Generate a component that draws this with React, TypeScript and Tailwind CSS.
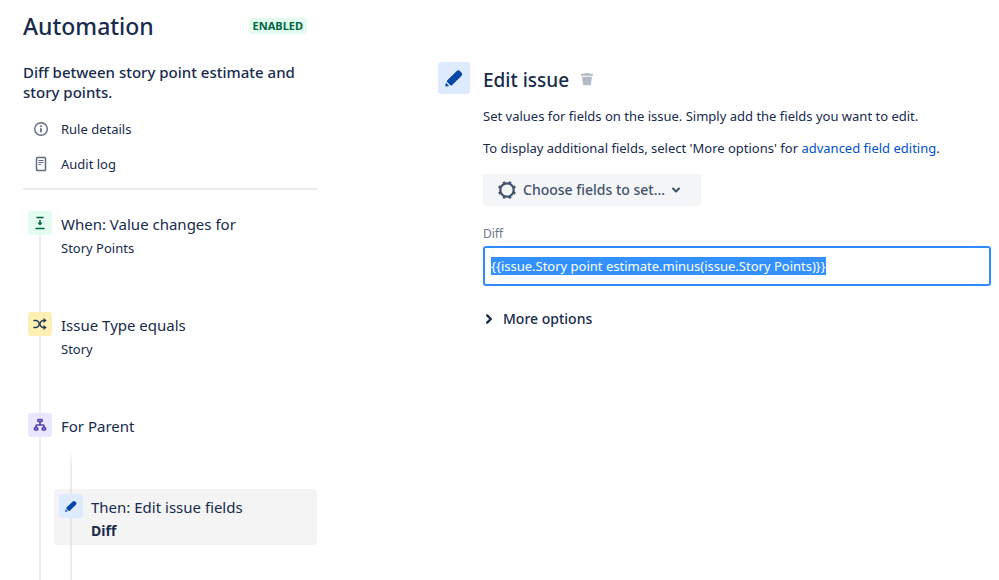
import React, { useEffect, useRef, useState } from 'react';

interface IconProps {
  className?: string;
}

const PencilIcon: React.FC<IconProps> = ({ className }) => (
  <svg viewBox="0 0 24 24" fill="currentColor" className={className} aria-hidden="true">
    <path d="M4 16.800 3.300 19.800a.7.7 0 0 0 .8.8l3-.7z" />
    <path d="M5.300 14.200 14.500 5.200a2.600 2.600 0 0 1 3.600 0l1.300 1.300a2.600 2.600 0 0 1 0 3.600L10.200 19.100a1.400 1.400 0 0 1-2 0l-2.900-2.900a1.400 1.400 0 0 1 0-2z" />
  </svg>
);

const InfoIcon: React.FC<IconProps> = ({ className }) => (
  <svg viewBox="0 0 16 16" fill="none" stroke="currentColor" strokeWidth="1.4" className={className} aria-hidden="true">
    <circle cx="8" cy="8" r="6.300" />
    <path d="M8 7.200v4" strokeWidth="1.800" />
    <circle cx="8" cy="5.200" r="1" fill="currentColor" stroke="none" />
  </svg>
);

const LogIcon: React.FC<IconProps> = ({ className }) => (
  <svg viewBox="0 0 16 16" fill="none" stroke="currentColor" className={className} aria-hidden="true">
    <rect x="3.500" y="1.500" width="9" height="13" rx="0.800" strokeWidth="1.500" />
    <path d="M5.500 4.500h5M5.500 6.500h5M5.500 8.500h2.500" strokeWidth="1.200" />
  </svg>
);

const ValueChangeIcon: React.FC<IconProps> = ({ className }) => (
  <svg viewBox="0 0 16 16" fill="none" stroke="currentColor" strokeWidth="1.500" className={className} aria-hidden="true">
    <path d="M5 2.500h6M4 13.500h8" strokeLinecap="round" />
    <path d="M8 5v4" />
    <path d="M5.500 7.500h5L8 10.700z" fill="currentColor" stroke="none" />
  </svg>
);

const ShuffleIcon: React.FC<IconProps> = ({ className }) => (
  <svg viewBox="0 0 16 16" fill="none" stroke="currentColor" strokeWidth="1.500" className={className} aria-hidden="true">
    <path d="M2 4.500h2c1.200 0 1.800.5 2.400 1.400l2.400 4.200c.6.900 1.200 1.400 2.200 1.400h1.500" strokeLinecap="round" />
    <path d="M2 11.500h2c1.200 0 1.800-.5 2.400-1.400l2.400-4.200c.6-.9 1.200-1.400 2.200-1.400h1.500" strokeLinecap="round" />
    <path d="M11.500 2v5l3.200-2.500zM11.500 9v5l3.200-2.500z" fill="currentColor" stroke="none" />
  </svg>
);

const BranchIcon: React.FC<IconProps> = ({ className }) => (
  <svg viewBox="0 0 16 16" fill="none" stroke="currentColor" strokeWidth="1.700" className={className} aria-hidden="true">
    <rect x="6" y="2.500" width="4" height="2" rx="0.500" />
    <path d="M8 5v3M4.100 10.500V8.700c0-.5.300-.7.700-.7h6.400c.4 0 .7.200.7.700v1.800" />
    <rect x="2.500" y="10.700" width="3.200" height="2.300" rx="1" />
    <rect x="10.300" y="10.700" width="3.200" height="2.300" rx="1" />
  </svg>
);

const TrashIcon: React.FC<IconProps> = ({ className }) => (
  <svg viewBox="0 0 16 16" fill="currentColor" className={className} aria-hidden="true">
    <path d="M2 2.500c0-.4.300-.7.700-.7h3.100l.4-.6c.1-.2.300-.3.500-.3h2.600c.2 0 .4.100.5.300l.4.600h3.100c.4 0 .7.300.7.700v1.200H2z" />
    <path d="M3 4.700h10l-1 7.300c-.1.700-.6 1.200-1.300 1.200H5.300c-.7 0-1.200-.5-1.300-1.200z" />
  </svg>
);

const GearIcon: React.FC<IconProps> = ({ className }) => (
  <svg viewBox="0 0 20 20" fill="none" stroke="currentColor" className={className} aria-hidden="true">
    <circle cx="10" cy="10" r="6.700" strokeWidth="2.200" />
    {/* Eight teeth, set either side of the axes */}
    <circle cx="10" cy="10" r="8" strokeWidth="2" pathLength="80" strokeDasharray="4 6" strokeDashoffset="-3" />
  </svg>
);

const ChevronIcon: React.FC<IconProps> = ({ className }) => (
  <svg viewBox="0 0 10 10" fill="none" stroke="currentColor" strokeWidth="2" strokeLinecap="round" strokeLinejoin="round" className={className} aria-hidden="true">
    <path d="M2 3.500 5 6.500l3-3" />
  </svg>
);

interface StepProps {
  icon: React.ReactNode;
  iconClass: string;
  title: string;
  detail?: string;
  className?: string;
  children?: React.ReactNode;
}

const Step: React.FC<StepProps> = ({ icon, iconClass, title, detail, className, children }) => (
  <li className={`flex gap-0.5 pl-[5px] ${className}`}>
    <div className="flex w-6 shrink-0 flex-col items-center">
      <span className={`flex size-6 shrink-0 items-center justify-center rounded-[3px] ${iconClass}`}>{icon}</span>
      <span className="w-0.5 flex-1 bg-[#ebecf0]" />
    </div>
    <div className="flex flex-1 flex-col">
      <a href="#step" className="block pt-px pl-[7px]">
        <span className="block text-[15px] leading-6">{title}</span>
        {detail && <span className="block text-[13px] leading-6">{detail}</span>}
      </a>
      {children}
    </div>
  </li>
);

export default function App() {
  const [value, setValue] = useState('{{issue.Story point estimate.minus(issue.Story Points)}}');
  const inputRef = useRef<HTMLInputElement>(null);

  // Open the editor with the expression ready to be replaced
  useEffect(() => {
    inputRef.current?.focus();
    inputRef.current?.select();
  }, []);

  return (
    <div className="flex min-h-screen gap-[12.5%] bg-white pr-2 pl-[23px] font-['Noto_Sans','Open_Sans',sans-serif] text-[#172b4d]">
      <aside className="flex w-[294px] shrink-0 flex-col">
        <header className="flex items-center justify-between pt-2 pr-2.5">
          <h1 className="text-[23px] leading-9 font-medium">Automation</h1>
          <span className="rounded-[3px] bg-[#e3fcef] px-1 text-[11px] leading-4 font-bold text-[#006644]">ENABLED</span>
        </header>

        <h2 className="mt-[18px] text-[15px] leading-5 font-medium">Diff between story point estimate and story points.</h2>

        <nav className="mt-[15px] flex flex-col gap-[11px] pl-2.5 text-[13px] leading-6">
          <a href="#details" className="flex items-center gap-3">
            <InfoIcon className="size-4 text-[#5e6c84]" />
            Rule details
          </a>
          <a href="#audit" className="flex items-center gap-3">
            <LogIcon className="size-4 text-[#5e6c84]" />
            Audit log
          </a>
        </nav>

        <hr className="mt-3 border-t-2 border-[#ebecf0]" />

        <ol className="mt-[21px] flex flex-1 flex-col">
          <Step
            className="min-h-[101px]"
            icon={<ValueChangeIcon className="size-4" />}
            iconClass="bg-[#e3fcef] text-[#006644]"
            title="When: Value changes for"
            detail="Story Points"
          />
          <Step
            className="min-h-[101px]"
            icon={<ShuffleIcon className="size-4" />}
            iconClass="bg-[#fff0b3] text-[#253858]"
            title="Issue Type equals"
            detail="Story"
          />
          <Step
            className="flex-1"
            icon={<BranchIcon className="size-4" />}
            iconClass="bg-[#eae6ff] text-[#5243aa]"
            title="For Parent"
          >
            <div className="mt-[11px] flex flex-1 flex-col">
              <span className="ml-4 h-10 w-0.5 bg-linear-to-b from-transparent to-[#ebecf0] to-40%" />
              <a href="#edit" className="flex gap-2 rounded-[3px] bg-[#f4f4f4] pl-[5px]">
                <span className="flex w-6 flex-col items-center">
                  <span className="h-[5px] w-0.5 bg-[#e4e4ea]" />
                  <span className="flex size-6 items-center justify-center rounded-[3px] bg-[#deebff] text-[#0747a6]">
                    <PencilIcon className="size-4" />
                  </span>
                  <span className="w-0.5 flex-1 bg-[#e4e4ea]" />
                </span>
                <span className="pt-1.5 pb-[3px]">
                  <span className="block text-[15px] leading-6">Then: Edit issue fields</span>
                  <span className="block text-[14px] leading-[23px] font-bold">Diff</span>
                </span>
              </a>
              <span className="ml-4 min-h-8 w-0.5 flex-1 bg-[#ebecf0]" />
            </div>
          </Step>
        </ol>
      </aside>

      <main className="flex min-w-0 flex-1 items-start gap-[13px] pt-[62px]">
        <span className="flex size-8 shrink-0 items-center justify-center rounded-[3px] bg-[#deebff] text-[#0747a6]">
          <PencilIcon className="size-6" />
        </span>

        <section className="min-w-0 flex-1">
          <div className="flex items-center gap-2.5">
            <h2 className="text-[19px] leading-9 font-medium">Edit issue</h2>
            <button type="button" aria-label="Delete" className="text-[#b3bac5]">
              <TrashIcon className="size-4" />
            </button>
          </div>

          <p className="mt-2 text-[13px] leading-5">
            Set values for fields on the issue. Simply add the fields you want to edit.
          </p>
          <p className="mt-3 text-[13px] leading-5">
            To display additional fields, select 'More options' for{' '}
            <a href="#advanced" className="text-[#0052cc]">advanced field editing</a>.
          </p>

          <button type="button" className="mt-4 flex h-8 items-center gap-1.5 rounded-[3px] bg-[#f4f5f7] pr-5 pl-3.5 text-[14px] leading-5 font-medium text-[#42526e]">
            <GearIcon className="size-5" />
            Choose fields to set...
            <ChevronIcon className="size-2.5" />
          </button>

          <label htmlFor="diff" className="mt-5 block text-[12px] leading-4 text-[#6b778c]">Diff</label>
          <input
            id="diff"
            ref={inputRef}
            type="text"
            value={value}
            onChange={e => setValue(e.target.value)}
            className="mt-1 h-10 w-full rounded-[3px] border-2 border-[#2e8bff] px-1.5 text-[13px] leading-5 outline-none selection:bg-[#3390ff] selection:text-white"
          />

          <button type="button" className="mt-[23px] flex items-center gap-2 text-[14px] leading-5 font-medium">
            <ChevronIcon className="size-3 -rotate-90" />
            More options
          </button>
        </section>
      </main>
    </div>
  );
}
